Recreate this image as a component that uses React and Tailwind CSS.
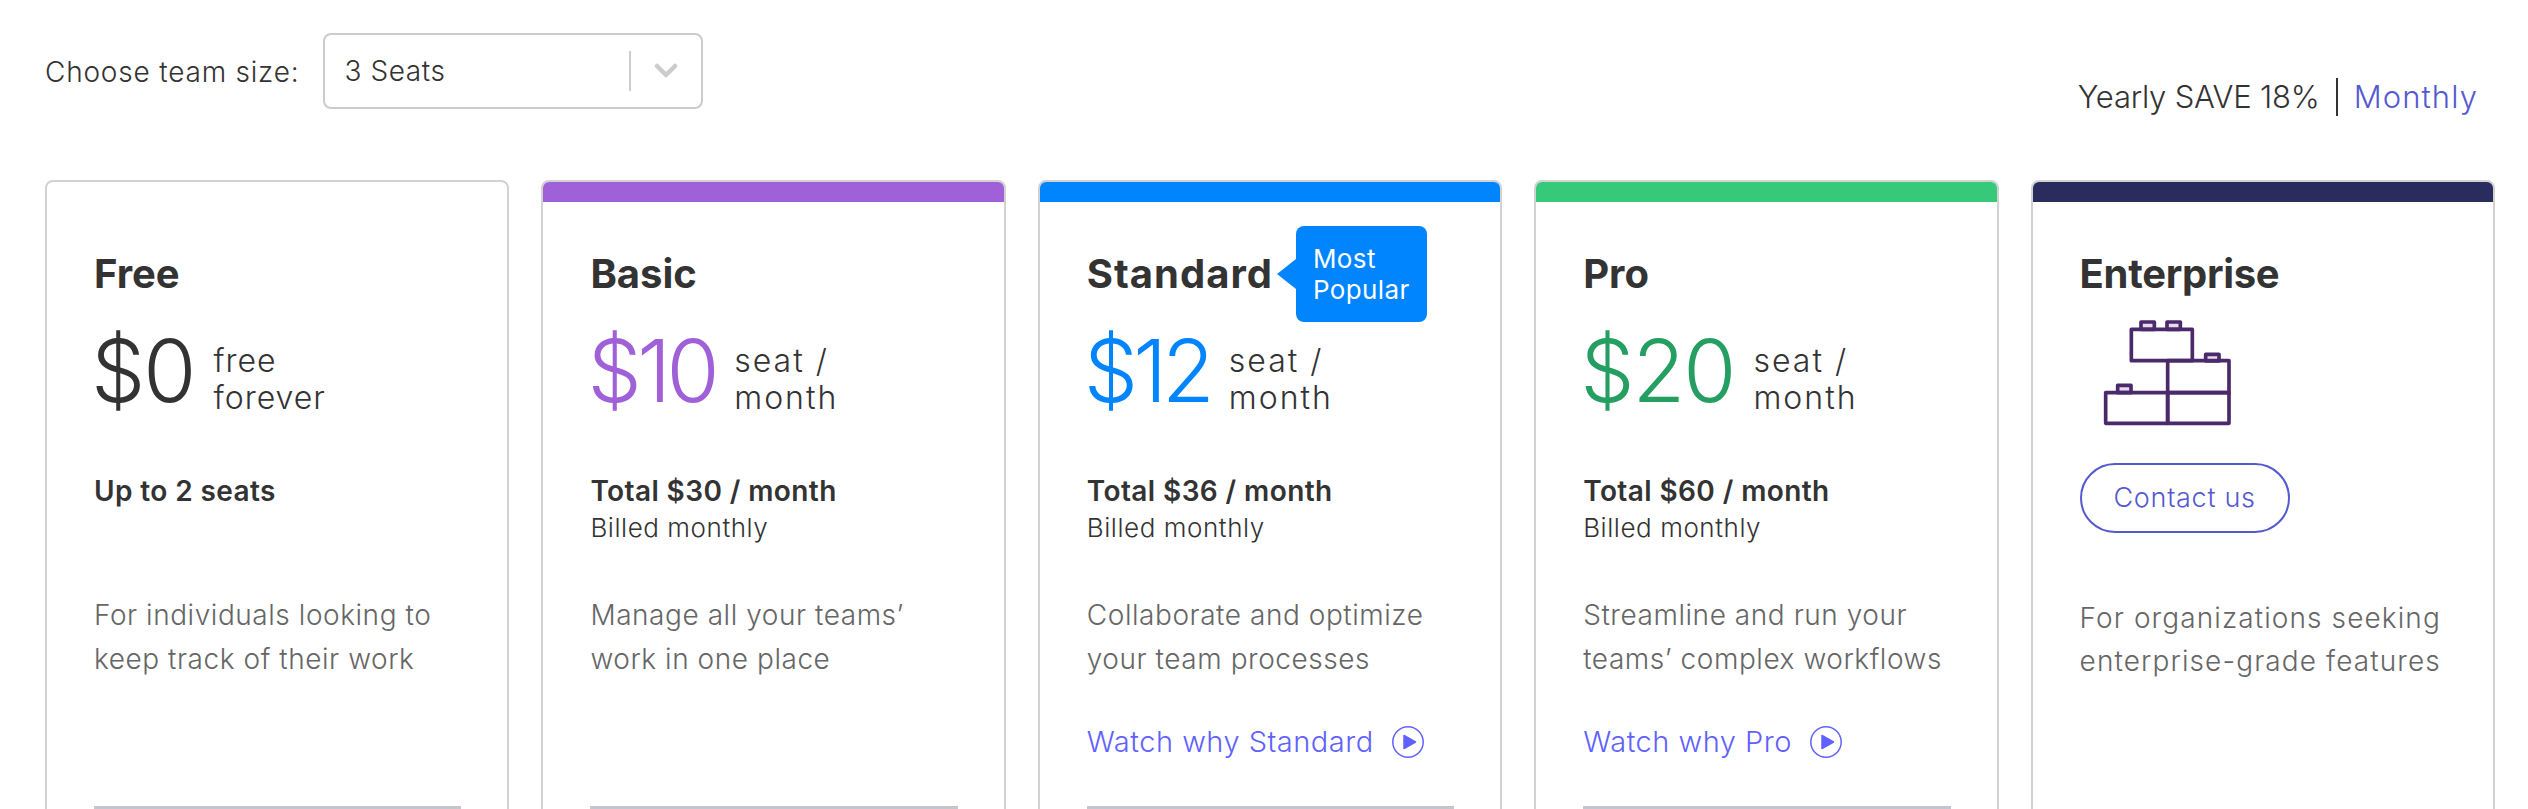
const plans = [
  {
    name: 'Free',
    bar: '',
    titleTracking: '',
    priceColor: 'text-[#333333]',
    priceTracking: 'tracking-[-2px]',
    unitTracking: 'tracking-[1px]',
    price: '$0',
    unit: ['free', 'forever'],
    total: 'Up to 2 seats',
    desc: ['For individuals looking to', 'keep track of their work'],
  },
  {
    name: 'Basic',
    bar: 'bg-[#a060d8]',
    titleTracking: '',
    priceColor: 'text-[#a060d8]',
    priceTracking: 'tracking-[-4.5px]',
    unitTracking: 'tracking-[2px]',
    price: '$10',
    unit: ['seat /', 'month'],
    total: 'Total $30 / month',
    billed: 'Billed monthly',
    desc: ['Manage all your teams’', 'work in one place'],
  },
  {
    name: 'Standard',
    bar: 'bg-[#0085ff]',
    titleTracking: 'tracking-[1px]',
    priceColor: 'text-[#0085ff]',
    priceTracking: 'tracking-[-5px]',
    unitTracking: 'tracking-[2px]',
    price: '$12',
    unit: ['seat /', 'month'],
    total: 'Total $36 / month',
    billed: 'Billed monthly',
    desc: ['Collaborate and optimize', 'your team processes'],
    watch: 'Watch why Standard',
    popular: true,
  },
  {
    name: 'Pro',
    bar: 'bg-[#37c97a]',
    titleTracking: '',
    priceColor: 'text-[#259e62]',
    priceTracking: 'tracking-[-2px]',
    unitTracking: 'tracking-[2px]',
    price: '$20',
    unit: ['seat /', 'month'],
    total: 'Total $60 / month',
    billed: 'Billed monthly',
    desc: ['Streamline and run your', 'teams’ complex workflows'],
    watch: 'Watch why Pro',
  },
];

const PlayIcon = () => (
  <svg width="32" height="32" viewBox="0 0 32 32" className="shrink-0">
    <circle cx="16" cy="16" r="15.2" fill="none" stroke="#6161ff" strokeWidth="1.5" />
    <path d="M12 9.5 L23.5 16 L12 22.5 Z" fill="#6161ff" stroke="#6161ff" strokeWidth="1.5" strokeLinejoin="round" />
  </svg>
);

const BricksIcon = () => (
  <svg width="130" height="107" viewBox="0 0 390 321" fill="none" stroke="#4a2a6a" strokeWidth="11" strokeLinejoin="round" className="ml-[23px] mt-[23px] block">
    <rect x="114" y="6" width="40" height="22" fill="#e4dcea" />
    <rect x="192" y="6" width="40" height="22" fill="#e4dcea" />
    <rect x="85" y="28" width="183" height="94" />
    <rect x="308" y="103" width="40" height="20" fill="#e4dcea" />
    <rect x="194" y="122" width="184" height="96" />
    <rect x="44" y="196" width="40" height="22" fill="#e4dcea" />
    <rect x="8" y="218" width="186" height="92" />
    <rect x="194" y="218" width="184" height="92" />
  </svg>
);

const PlanCard = ({ plan }) => (
  <div className="h-[700px] rounded-[8px] border-2 border-[#d2d2d2] bg-white overflow-hidden">
    <div className={`h-[20px] ${plan.bar}`} />
    <div className="pl-[47px] pr-[46px]">
      <div className="mt-[49px] flex h-[46px] items-center">
        <h2 className={`text-[40px] leading-[46px] font-bold text-[#333333] ${plan.titleTracking}`}>{plan.name}</h2>
        {plan.popular && (
          <div className="relative ml-[23px] -mt-[1px] h-[96px] w-[131px] shrink-0 rounded-[8px] bg-[#0085ff] px-[17px] pt-[17px] text-[26px] leading-[31px] tracking-[0.4px] text-white">
            <span className="absolute left-[-19px] top-[33px] h-0 w-0 border-y-[15px] border-r-[19px] border-y-transparent border-r-[#0085ff]" />
            Most
            <br />
            Popular
          </div>
        )}
      </div>
      <div className="mt-[30px] flex h-[88px] items-center">
        <span className={`-ml-[3px] text-[86px] leading-[88px] font-light ${plan.priceTracking} ${plan.priceColor}`}>{plan.price}</span>
        <span className={`ml-[19px] mt-[16px] text-[32px] leading-[37px] font-light text-[#333333] ${plan.unitTracking}`}>
          {plan.unit[0]}
          <br />
          {plan.unit[1]}
        </span>
      </div>
      <div className="mt-[58px] h-[73px] text-[#333333]">
        <div className="text-[28px] leading-[37px] font-semibold tracking-[0.4px]">{plan.total}</div>
        {plan.billed && <div className="text-[26px] leading-[35px] font-light tracking-[0.55px]">{plan.billed}</div>}
      </div>
      <div className="mt-[47px] text-[28px] leading-[44px] font-light tracking-[0.55px] text-[#666666]">
        <div>{plan.desc[0]}</div>
        <div>{plan.desc[1]}</div>
      </div>
      <div className="mt-[45px] flex h-[32px] items-center gap-[18px] text-[29px] font-light tracking-[0.5px] text-[#6161ff]">
        {plan.watch && (
          <>
            <span>{plan.watch}</span>
            <PlayIcon />
          </>
        )}
      </div>
      <div className="mt-[48px] h-[3px] bg-[#c3c6cc]" />
    </div>
  </div>
);

const EnterpriseCard = () => (
  <div className="h-[700px] rounded-[8px] border-2 border-[#d2d2d2] bg-white overflow-hidden">
    <div className="h-[20px] bg-[#2b2c5e]" />
    <div className="px-[47px]">
      <h2 className="mt-[49px] text-[40px] leading-[46px] font-bold tracking-[-0.3px] text-[#333333]">Enterprise</h2>
      <BricksIcon />
      <button className="mt-[36px] flex h-[70px] w-[210px] items-center justify-center rounded-full border-2 border-[#5559d0] text-[27px] font-light tracking-[0.7px] text-[#5559d0]">
        Contact us
      </button>
      <div className="mt-[64px] text-[28px] leading-[43px] font-light tracking-[1.1px] text-[#666666]">
        <div>For organizations seeking</div>
        <div>enterprise-grade features</div>
      </div>
      <div className="mt-[126px] h-[1px] bg-[#c3c6cc]" />
    </div>
  </div>
);

export default function App() {
  return (
    <div className="h-[809px] w-[2528px] overflow-hidden bg-white font-[Inter,sans-serif]">
      <div className="flex h-[180px] justify-between pl-[45px] pr-[50px]">
        <div className="flex h-[76px] mt-[33px] items-center">
          <span className="mt-[2px] text-[28px] font-light tracking-[0.8px] text-[#333333]">Choose team size:</span>
          <div className="ml-[24px] flex h-[76px] w-[380px] items-center rounded-[8px] border-2 border-[#cccccc] bg-white">
            <span className="ml-[19px] flex-1 text-[28px] font-light tracking-[0.6px] text-[#333333]">3 Seats</span>
            <span className="h-[40px] w-[2px] bg-[#cccccc]" />
            <svg width="24" height="16" viewBox="0 0 24 16" fill="none" className="mx-[23px]">
              <path d="M3 3 L12 12 L21 3" stroke="#cccccc" strokeWidth="4.5" strokeLinecap="round" strokeLinejoin="round" />
            </svg>
          </div>
        </div>
        <div className="mt-[78px] flex h-[38px] items-center text-[31px] font-light">
          <span className="tracking-[-0.2px] text-[#333333]">Yearly SAVE 18%</span>
          <span className="ml-[16px] mr-[16px] h-[38px] w-[2px] bg-[#333333]" />
          <span className="tracking-[1.1px] text-[#5559d0]">Monthly</span>
        </div>
      </div>
      <div className="grid grid-cols-5 gap-[32px] pl-[45px] pr-[33px]">
        {plans.map((plan) => (
          <PlanCard key={plan.name} plan={plan} />
        ))}
        <EnterpriseCard />
      </div>
    </div>
  );
}
